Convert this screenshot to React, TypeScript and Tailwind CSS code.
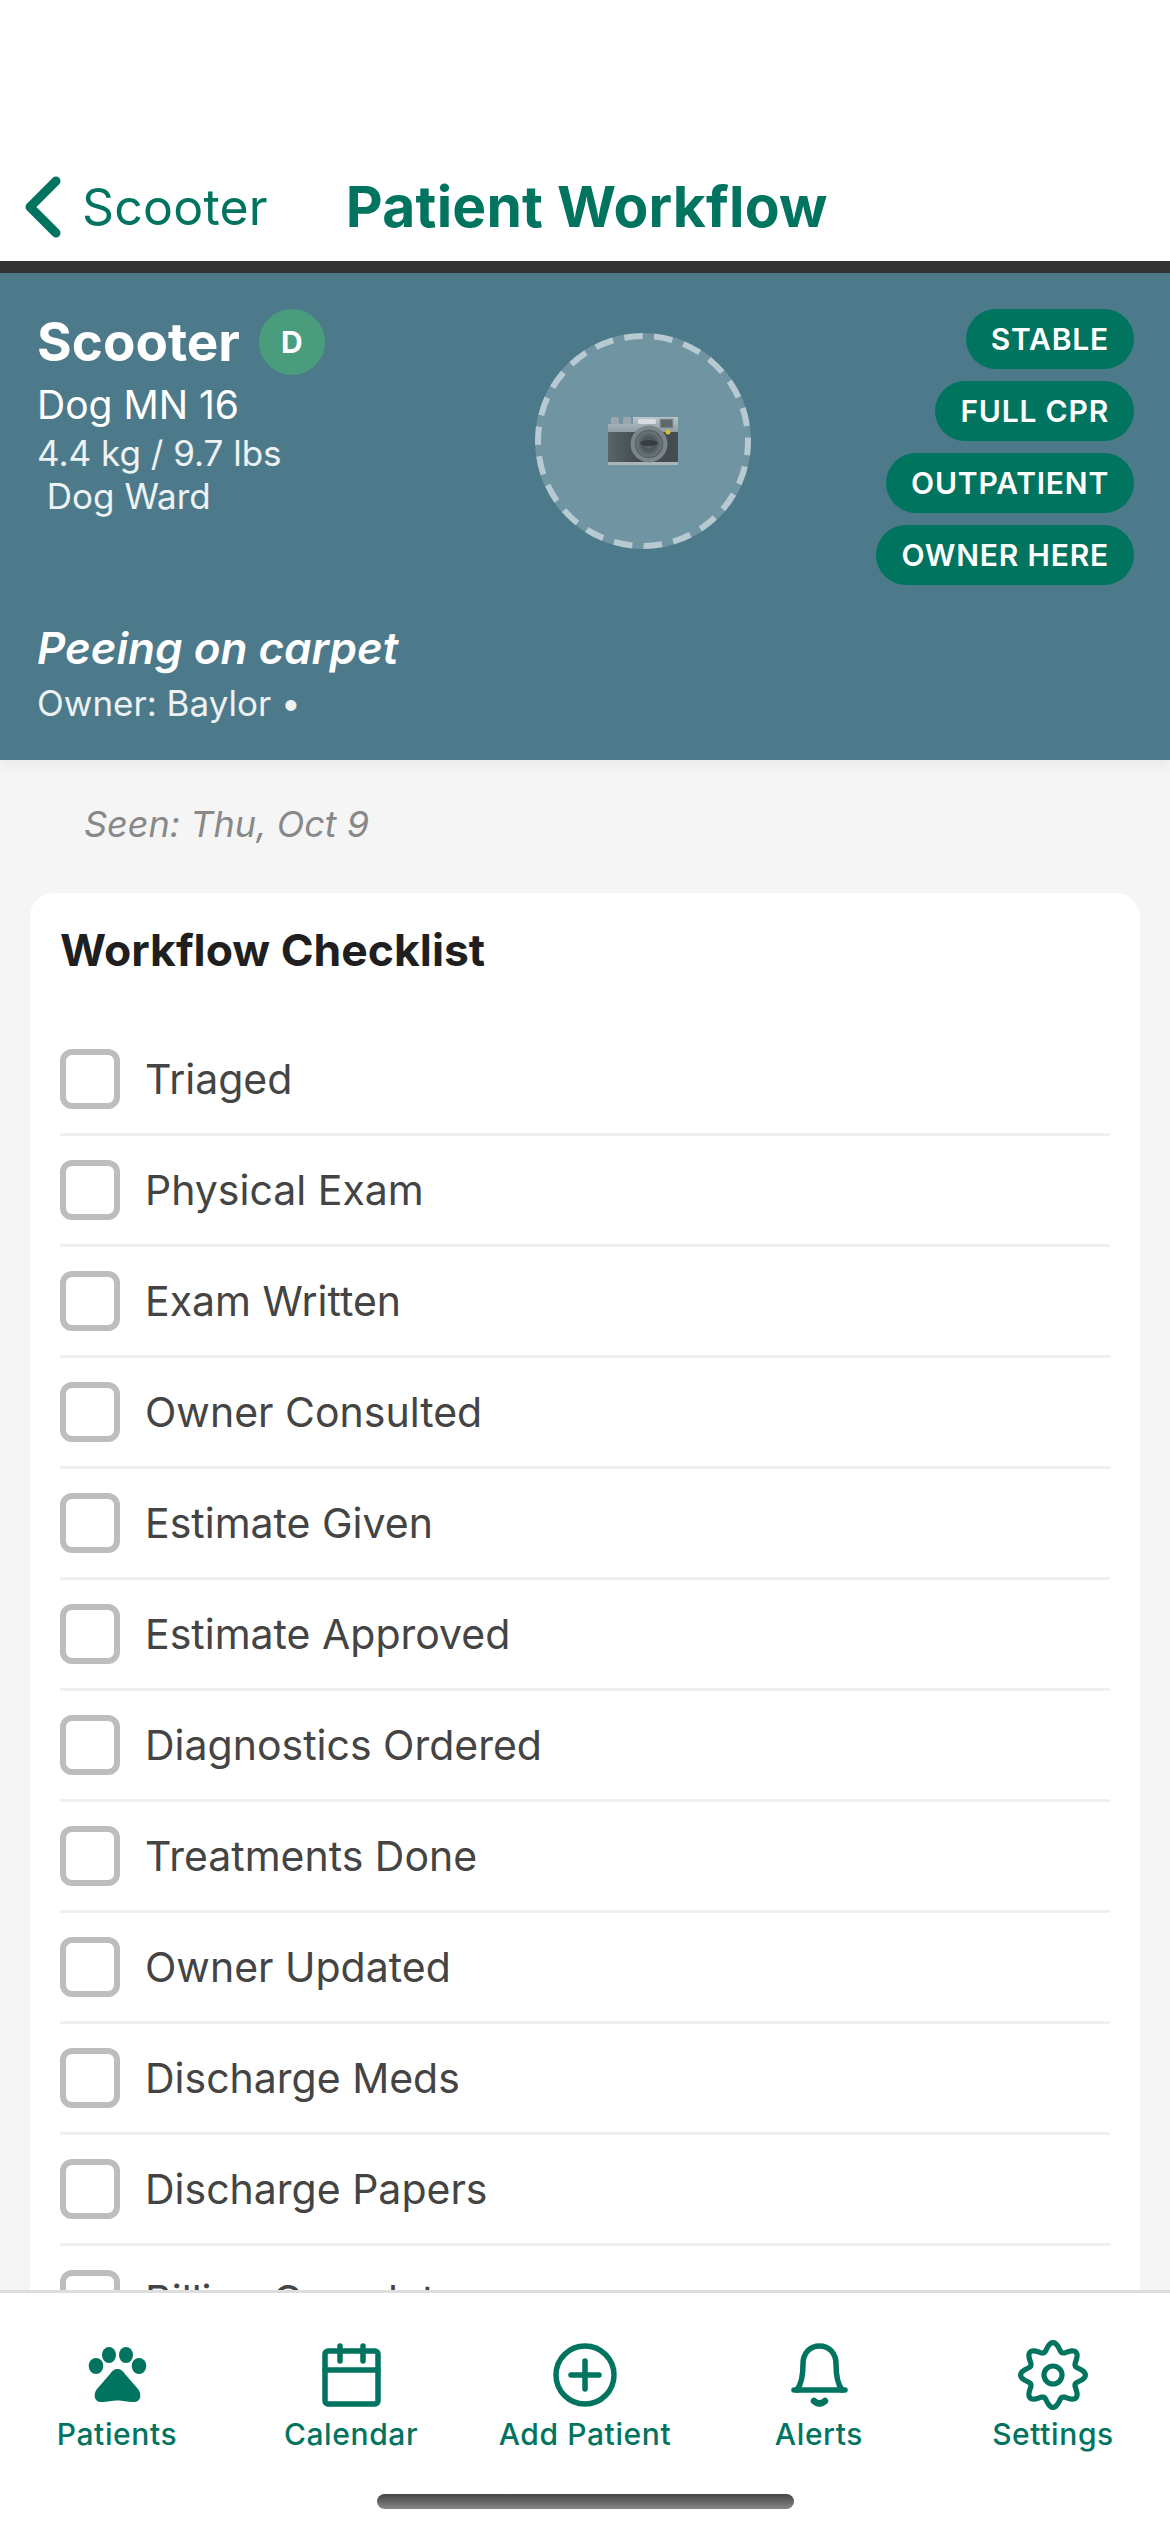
const CHECKLIST = [
  "Triaged",
  "Physical Exam",
  "Exam Written",
  "Owner Consulted",
  "Estimate Given",
  "Estimate Approved",
  "Diagnostics Ordered",
  "Treatments Done",
  "Owner Updated",
  "Discharge Meds",
  "Discharge Papers",
  "Billing Complete",
];

const BADGES = ["STABLE", "FULL CPR", "OUTPATIENT", "OWNER HERE"];

// wavy outline of the settings gear, 8 teeth
const GEAR_PATH =
  Array.from({ length: 240 }, (_, i) => {
    const t = (i / 240) * Math.PI * 2;
    const r = 28.2 + 4.2 * Math.cos(8 * t);
    const x = 36 + r * Math.sin(t);
    const y = 36 - r * Math.cos(t);
    return `${i === 0 ? "M" : "L"}${x.toFixed(2)} ${y.toFixed(2)}`;
  }).join(" ") + " Z";

function BackChevron() {
  return (
    <svg width="36" height="62" viewBox="0 0 36 62" fill="none" className="shrink-0">
      <path d="M31 5 L5 31 L31 57" stroke="#01745f" strokeWidth="9" strokeLinecap="round" strokeLinejoin="round" />
    </svg>
  );
}

function CameraEmoji() {
  return (
    <svg width="70" height="48" viewBox="0 0 70 48">
      <defs>
        <linearGradient id="plate" x1="0" y1="0" x2="0" y2="1">
          <stop offset="0" stopColor="#b9c4ca" />
          <stop offset="1" stopColor="#8d9aa1" />
        </linearGradient>
        <linearGradient id="body" x1="0" y1="0" x2="1" y2="0">
          <stop offset="0" stopColor="#5b6468" />
          <stop offset="0.5" stopColor="#3f474c" />
          <stop offset="1" stopColor="#454d52" />
        </linearGradient>
        <radialGradient id="glass">
          <stop offset="0" stopColor="#6d777c" />
          <stop offset="0.45" stopColor="#4a5358" />
          <stop offset="1" stopColor="#707a80" />
        </radialGradient>
      </defs>
      <rect x="3" y="0" width="8" height="8" rx="2" fill="#9aa6ac" />
      <rect x="15" y="0" width="8" height="8" rx="2" fill="#9aa6ac" />
      <path d="M0 7 H25 V0 H70 V16 H0 Z" fill="url(#plate)" />
      <rect x="0" y="15" width="70" height="30" fill="url(#body)" />
      <rect x="0" y="45" width="70" height="3" fill="#aab4b9" />
      <rect x="30" y="2" width="18" height="5" rx="1.5" fill="#d5dcdf" />
      <rect x="52" y="2" width="13" height="9" fill="#5f686c" stroke="#8f999e" strokeWidth="1" />
      <circle cx="60" cy="15" r="2.5" fill="#d9bd3a" />
      <circle cx="41" cy="27" r="18.5" fill="#7b858a" />
      <circle cx="41" cy="27" r="13.5" fill="url(#glass)" stroke="#586166" strokeWidth="1.5" />
      <ellipse cx="41" cy="26" rx="9" ry="3" fill="#363d41" />
    </svg>
  );
}

function DashedRing() {
  return (
    <svg width="216" height="216" viewBox="0 0 216 216" fill="none" className="absolute inset-0">
      <circle cx="108" cy="108" r="105" stroke="#ffffff" strokeOpacity="0.5" strokeWidth="6" strokeDasharray="18.5 11.49" strokeDashoffset="4.3" />
    </svg>
  );
}

function PawIcon() {
  return (
    <svg width="65" height="70" viewBox="0 0 65 70" fill="#01745f">
      <ellipse cx="11" cy="26" rx="7.3" ry="8" />
      <ellipse cx="24" cy="15" rx="7" ry="8" />
      <ellipse cx="41" cy="15" rx="7" ry="8" />
      <ellipse cx="54" cy="26" rx="7.3" ry="8" />
      <path d="M32.5 29 C36 29 38 31 40 34 L53 49 C57 54 56 62 49 62 C42 62 38 60.5 32.5 60.5 C27 60.5 23 62 16 62 C9 62 8 54 12 49 L25 34 C27 31 29 29 32.5 29 Z" />
    </svg>
  );
}

function CalendarIcon() {
  return (
    <svg width="65" height="70" viewBox="0 0 65 70" fill="none" stroke="#01745f" strokeWidth="5.5" strokeLinecap="round" strokeLinejoin="round">
      <rect x="6" y="11" width="53" height="53" rx="3" />
      <path d="M6 30 H59" />
      <path d="M21 6 V21 M44 6 V21" />
    </svg>
  );
}

function PlusCircleIcon() {
  return (
    <svg width="70" height="70" viewBox="0 0 70 70" fill="none" stroke="#01745f" strokeWidth="5.5" strokeLinecap="round">
      <circle cx="35" cy="35" r="29" />
      <path d="M35 21 V49 M21 35 H49" />
    </svg>
  );
}

function BellIcon() {
  return (
    <svg width="65" height="70" viewBox="0 0 65 70" fill="none" stroke="#01745f" strokeWidth="5.5" strokeLinecap="round" strokeLinejoin="round">
      <path d="M10 50 C16 42 16 30 16 24 C16 13 23 6 32.5 6 C42 6 49 13 49 24 C49 30 49 42 55 50" />
      <path d="M7 50 H58" />
      <path d="M27 61 Q32.5 66 38 61" strokeWidth="6.5" />
    </svg>
  );
}

function GearIcon() {
  return (
    <svg width="72" height="72" viewBox="0 0 72 72" fill="none" stroke="#01745f" strokeWidth="5.2" strokeLinejoin="round">
      <path d={GEAR_PATH} />
      <circle cx="36" cy="36" r="9" />
    </svg>
  );
}

const TABS = [
  { label: "Patients", icon: <PawIcon /> },
  { label: "Calendar", icon: <CalendarIcon /> },
  { label: "Add Patient", icon: <PlusCircleIcon /> },
  { label: "Alerts", icon: <BellIcon /> },
  { label: "Settings", icon: <GearIcon /> },
];

function App() {
  return (
    <div className="relative flex h-[2532px] w-[1170px] flex-col overflow-hidden bg-[#f5f5f5] font-['Inter',sans-serif]">
      <header className="flex h-[261px] shrink-0 items-end bg-white pb-[23px] pl-[25px]">
        <BackChevron />
        <span className="ml-[21px] text-[50px] leading-[62px] tracking-[0.2px] text-[#01745f]">Scooter</span>
        <h1 className="ml-[78px] text-[57px] leading-[62px] font-bold tracking-[0.2px] text-[#01745f]">Patient Workflow</h1>
      </header>
      <div className="h-[12px] shrink-0 bg-[#333333]" />

      <section className="flex shrink-0 flex-col bg-[#4d7a8b] pt-[36px] pr-[36px] pb-[34px] pl-[37px] shadow-[0_6px_12px_rgba(0,0,0,0.05)]">
        <div className="flex">
          <div className="w-[498px] text-white">
            <div className="flex h-[66px] items-center gap-[19px]">
              <span className="text-[53px] leading-[66px] font-bold">Scooter</span>
              <span className="flex size-[66px] items-center justify-center rounded-full bg-[#4a9d7c] text-[30px] font-bold">D</span>
            </div>
            <p className="mt-[7px] text-[39px] leading-[46px]">Dog MN 16</p>
            <p className="mt-[4px] text-[35px] leading-[42px] text-white/90">4.4 kg / 9.7 lbs</p>
            <p className="mt-[1px] text-[35px] leading-[42px] text-white/90">&nbsp;Dog Ward</p>
          </div>
          <div className="relative mt-[24px] flex size-[216px] items-center justify-center rounded-full bg-white/20">
            <DashedRing />
            <CameraEmoji />
          </div>
          <div className="ml-auto flex flex-col items-end gap-[12px]">
            {BADGES.map((badge) => (
              <span key={badge} className="flex h-[60px] items-center rounded-full bg-[#01745f] px-[25px] text-[30px] font-semibold tracking-[0.8px] text-white">
                {badge}
              </span>
            ))}
          </div>
        </div>
        <p className="mt-[33px] text-[44px] leading-[60px] font-semibold text-white italic">Peeing on carpet</p>
        <p className="mt-[2px] text-[35px] leading-[46px] text-white/90">Owner: Baylor •</p>
      </section>

      <main className="min-h-0 flex-1 overflow-hidden">
        <p className="pt-[41px] pl-[84px] text-[36px] leading-[46px] text-[#888888] italic">Seen: Thu, Oct 9</p>
        <div className="mx-[30px] mt-[46px] rounded-[24px] bg-white px-[30px] pt-[29px]">
          <h2 className="text-[44.5px] leading-[56px] font-bold text-[#1f1f1f]">Workflow Checklist</h2>
          <ul className="mt-[47px]">
            {CHECKLIST.map((item) => (
              <li key={item} className="flex items-center gap-[25px] border-b-[3px] border-[#f0f0f0] py-[24px]">
                <span className="size-[60px] shrink-0 rounded-[12px] border-[6px] border-[#bdbdbd] bg-white" />
                <span className="text-[41px] leading-[60px] text-[#444444]">{item}</span>
              </li>
            ))}
          </ul>
        </div>
      </main>

      <nav className="relative h-[242px] shrink-0 border-t-[3px] border-[#dddddd] bg-white">
        <div className="grid grid-cols-5">
          {TABS.map((tab) => (
            <div key={tab.label} className="flex flex-col items-center pt-[47px]">
              <div className="flex h-[70px] items-center justify-center">{tab.icon}</div>
              <span className="mt-[5px] text-[30px] leading-[38px] font-medium tracking-[0.6px] text-[#01745f]">{tab.label}</span>
            </div>
          ))}
        </div>
        <div className="absolute top-[201px] left-[377px] h-[15px] w-[417px] rounded-full bg-gradient-to-b from-[#444444] to-[#888888]" />
      </nav>
    </div>
  );
}

export default App;
